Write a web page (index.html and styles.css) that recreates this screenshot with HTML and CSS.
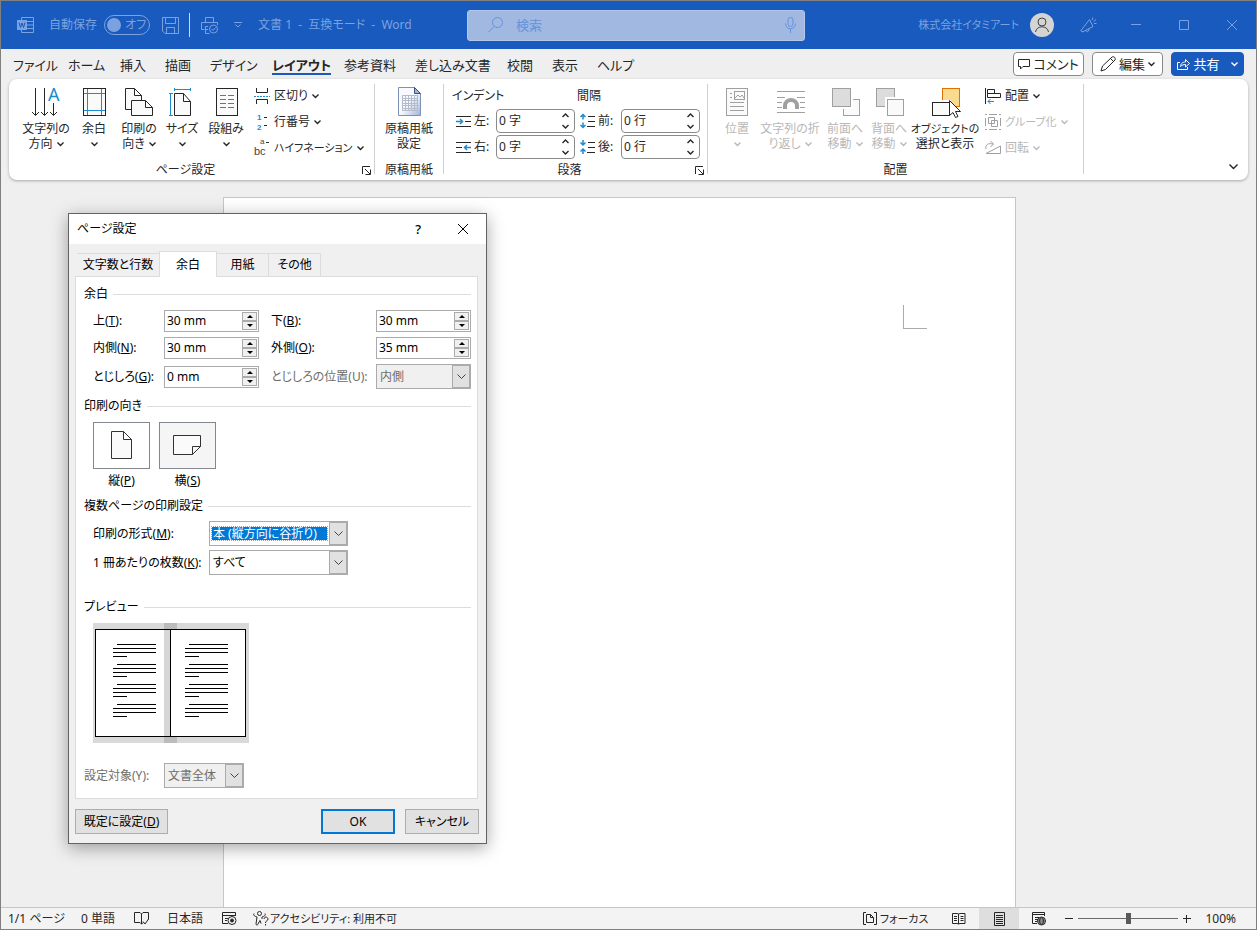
FILE: index.html
```html
<!DOCTYPE html>
<html lang="ja">
  <head>
    <meta charset="UTF-8">
    <title>文書 1 - 互換モード - Word</title>
    <link rel="stylesheet" href="styles.css">
  </head>
  <body>
    <header class="titlebar">
      <div class="title-left">
        <svg class="word-logo" width="17" height="16" viewBox="0 0 17 16"><path d="M4.500 4V.5h12v15h-12V12M10 4.500h6.500M10 8h6.500M10 11.500h6.500" /><rect class="solid" x="0" y="3" width="10" height="10" /><path class="cut" d="M2 5.500 3.500 10.500 5 6l1.500 4.500L8 5.500" /></svg>
        <label class="autosave" for="autosave">自動保存</label>
        <span class="switch"><input type="checkbox" id="autosave"><span>オフ</span></span>
        <button type="button" class="save" aria-label="保存"><svg width="17" height="17" viewBox="0 0 17 17"><path d="M.5.500h16v16H3L.5 14zM3.500.500v6h10v-6M4.500 16.500v-6h8v6" /></svg></button>
        <span class="title-divider"></span>
        <button type="button" class="print" aria-label="印刷"><svg width="18" height="17" viewBox="0 0 18 17"><path d="M4.500 5V.500h8V5M7 12.500H4.500M3.500 12.500H.500V5.500h16V8M4.500 12.500V9.500H7M4.500 12v4.500h4" /><circle cx="12.500" cy="12" r="4" /><path d="m10.500 12 1.500 1.500 2.500-3" /></svg></button>
        <button type="button" class="customize" aria-label="カスタマイズ"><svg width="8" height="6" viewBox="0 0 8 6"><path d="M0 .500h8M1.500 2.500 4 5l2.500-2.500" /></svg></button>
        <span>文書 1 &nbsp;- &nbsp;互換モード &nbsp;- &nbsp;Word</span>
      </div>
      <div class="search">
        <svg width="16" height="16" viewBox="0 0 16 16"><circle cx="9.500" cy="5.500" r="5" /><path d="M6 9.500.500 15" /></svg>
        <input type="text" placeholder="検索" aria-label="検索">
        <svg width="11" height="16" viewBox="0 0 11 16"><rect x="3" y=".5" width="5" height="9" rx="2.500" /><path d="M.500 6.500c0 7 10 7 10 0M5.500 12v4" /></svg>
      </div>
      <div class="title-right">
        <span class="compact">株式会社イタミアート</span>
        <svg class="avatar" width="24" height="24" viewBox="0 0 24 24"><circle class="face" cx="12" cy="12" r="12" /><circle cx="12" cy="9" r="4" /><path d="M5.500 19c1-7 12-7 13 0" /></svg>
        <button type="button" class="caption" aria-label="お知らせ"><svg width="17" height="16" viewBox="0 0 17 16"><path d="M1 13.500 9.500 2.500l3.500 7L2.500 15zM1 13.500 2.500 15M6 13c0 3 3.500 2 3-1.500M12 3l1-2.500M13.500 4.500l2.500-2M14 6.500h2.500" /></svg></button>
        <button type="button" class="caption" aria-label="最小化"><svg width="10" height="10" viewBox="0 0 10 10"><path d="M0 4.500h10" /></svg></button>
        <button type="button" class="caption" aria-label="最大化"><svg width="10" height="10" viewBox="0 0 10 10"><path d="M.5.500h9v9h-9z" /></svg></button>
        <button type="button" class="caption" aria-label="閉じる"><svg width="10" height="10" viewBox="0 0 10 10"><path d="m0 0 10 10M10 0 0 10" /></svg></button>
      </div>
    </header>

    <div class="tabbar">
      <nav class="tabs">
        <a href="#">ファイル</a>
        <a href="#">ホーム</a>
        <a href="#">挿入</a>
        <a href="#">描画</a>
        <a href="#">デザイン</a>
        <a href="#" class="active">レイアウト</a>
        <a href="#">参考資料</a>
        <a href="#">差し込み文書</a>
        <a href="#">校閲</a>
        <a href="#">表示</a>
        <a href="#">ヘルプ</a>
      </nav>
      <div class="tab-actions">
        <button type="button" class="pill"><svg width="12" height="11" viewBox="0 0 12 11"><path d="M.5.500h11v7H5L2.500 10V7.500h-2z" /></svg>コメント</button>
        <button type="button" class="pill"><svg width="16" height="16" viewBox="0 0 16 16"><path d="m1 15 1.500-5L12 1c2-1 4 1 3 3L5.500 13.500zM10.500 2.500l3 3" /></svg>編集<svg class="chev" width="7" height="4" viewBox="0 0 7 4"><path d="m.5.500 3 3 3-3" /></svg></button>
        <button type="button" class="pill primary"><svg width="13" height="12" viewBox="0 0 13 12"><path d="M3 4.500H.500v7h10V9M3.500 8.500C4 5 6 4 8.500 4V1.500l4 4-4 3.500V6.500C6.500 6.500 5 7 3.500 8.500z" /></svg>共有<svg class="chev far" width="7" height="4" viewBox="0 0 7 4"><path d="m.5.500 3 3 3-3" /></svg></button>
      </div>
    </div>

    <section class="ribbon">
      <div class="group group-page">
        <div class="group-body">
          <div class="big-buttons page-buttons">
            <button type="button" class="big">
              <svg width="36" height="32" viewBox="0 0 36 32"><path d="M7.500 2v27M4 26l3.500 3.500L11 26M16.500 2v27M13 26l3.500 3.500L20 26M25.500 17v12M22 26l3.500 3.500L29 26" /><text class="letter" x="20" y="15">A</text></svg>
              <span>文字列の</span>
              <span>方向<svg class="chev" width="7" height="4" viewBox="0 0 7 4"><path d="m.5.500 3 3 3-3" /></svg></span>
            </button>
            <button type="button" class="big">
              <svg width="36" height="32" viewBox="0 0 36 32"><rect class="paper" x="7.500" y="2.500" width="22" height="27" /><path class="blue" d="M11.500 3v26M25.500 3v26M8 7.500h21M8 24.500h21" /></svg>
              <span>余白</span>
              <span><svg class="chev" width="7" height="4" viewBox="0 0 7 4"><path d="m.5.500 3 3 3-3" /></svg></span>
            </button>
            <button type="button" class="big">
              <svg width="36" height="32" viewBox="0 0 36 32"><path class="paper" d="M10 23.500H4.500v-21h9l7 7V14M13.500 2.500v7h7" /><path class="paper" d="M10.500 14.500h14l7 7v8h-21zM24.500 14.500v7h7" /></svg>
              <span>印刷の</span>
              <span>向き<svg class="chev" width="7" height="4" viewBox="0 0 7 4"><path d="m.5.500 3 3 3-3" /></svg></span>
            </button>
            <button type="button" class="big">
              <svg width="36" height="32" viewBox="0 0 36 32"><path class="paper" d="M10.500 7.500h9l7 8v14h-16zM19.500 7.500v8h7" /><path class="blue" d="M6.500 7v23M5 7.500h4M5 29.500h4M10 3.500h17M10.500 2v3M26.500 2v3" /></svg>
              <span>サイズ</span>
              <span><svg class="chev" width="7" height="4" viewBox="0 0 7 4"><path d="m.5.500 3 3 3-3" /></svg></span>
            </button>
            <button type="button" class="big">
              <svg width="36" height="32" viewBox="0 0 36 32"><rect class="paper" x="8.500" y="2.500" width="21" height="27" /><path class="blue" d="M12 9.500h6M12 13.500h6M12 17.500h6M12 21.500h6M20 9.500h6M20 13.500h6M20 17.500h6M20 21.500h6" /></svg>
              <span>段組み</span>
              <span><svg class="chev" width="7" height="4" viewBox="0 0 7 4"><path d="m.5.500 3 3 3-3" /></svg></span>
            </button>
          </div>
          <div class="small-buttons">
            <button type="button" class="small"><svg width="16" height="16" viewBox="0 0 16 16"><path d="M2.500 0v4.500h11V0M2.500 16v-4.500h11V16" /><path class="blue" d="M0 8.500h16" stroke-dasharray="2 1" /></svg>区切り<svg class="chev" width="7" height="4" viewBox="0 0 7 4"><path d="m.5.500 3 3 3-3" /></svg></button>
            <button type="button" class="small"><svg width="16" height="16" viewBox="0 0 16 16"><text class="tiny" x="3" y="6">1</text><text class="tiny" x="3" y="16">2</text><path d="M10 3.500h3M10 11.500h3" /></svg>行番号<svg class="chev" width="7" height="4" viewBox="0 0 7 4"><path d="m.5.500 3 3 3-3" /></svg></button>
            <button type="button" class="small"><svg width="16" height="16" viewBox="0 0 16 16"><text class="syllable" x="0" y="15">bc</text><text class="syllable top" x="6" y="4">a</text><path d="M12 2.500h3" /></svg><span class="compact">ハイフネーション</span><svg class="chev" width="7" height="4" viewBox="0 0 7 4"><path d="m.5.500 3 3 3-3" /></svg></button>
          </div>
        </div>
        <div class="group-foot">
          <span>ページ設定</span>
          <button type="button" class="launcher" aria-label="ページ設定を開く"><svg width="9" height="9" viewBox="0 0 9 9"><path d="M.500 8V.500H8M3 3l5 5M8.500 3.500v5h-5" /></svg></button>
        </div>
      </div>
      <span class="divider"></span>

      <div class="group group-genko">
        <div class="group-body">
          <button type="button" class="big">
            <svg width="36" height="32" viewBox="0 0 36 32"><defs><linearGradient id="sheet" x1="0" y1="0" x2="1" y2="1"><stop offset="0.500" stop-color="#f8faff" /><stop offset="1" stop-color="#9db4dc" /></linearGradient></defs><path class="genko" d="M7.500 1.500h16l6 6v22h-22z" /><path class="genko-fold" d="M23.500 1.500v6h6z" /><path class="genko-lines" d="M11 9.500h15M11 12.500h15M11 14.500h15M11 17.500h15M11 19.500h15M11 22.500h15M11 24.500h15M11.500 9v16M14.500 9v16M17.500 9v16M20.500 9v16M23.500 9v16M26.500 9v16" /></svg>
            <span>原稿用紙</span>
            <span>設定</span>
          </button>
        </div>
        <div class="group-foot"><span>原稿用紙</span></div>
      </div>
      <span class="divider"></span>

      <div class="group group-paragraph">
        <div class="group-body">
          <div class="headings"><span>インデント</span><span>間隔</span></div>
          <div class="measures">
            <label for="indent-left"><svg width="16" height="16" viewBox="0 0 16 16"><path d="M0 3.500h15M9 8.500h6M0 13.500h15" /><path class="arrow" d="M0 8.500h7M4 6l2.500 2.500L4 11" /></svg>左:</label>
            <div class="spin"><input type="text" id="indent-left" value="0 字"><svg class="chev" width="7" height="16" viewBox="0 0 7 16"><path d="m.500 4 3-3 3 3M.500 12l3 3 3-3" /></svg></div>
            <label for="space-before"><svg width="16" height="16" viewBox="0 0 16 16"><path d="M8 3.500h7M8 8.500h7M7 13.500h8" /><path class="arrow" d="M3 1.500v5M.500 4 3 1.500 5.500 4M3 9.500v5M.500 12 3 14.500 5.500 12" /></svg>前:</label>
            <div class="spin"><input type="text" id="space-before" value="0 行"><svg class="chev" width="7" height="16" viewBox="0 0 7 16"><path d="m.500 4 3-3 3 3M.500 12l3 3 3-3" /></svg></div>
            <label for="indent-right"><svg width="16" height="16" viewBox="0 0 16 16"><path d="M0 3.500h15M0 8.500h6M0 13.500h15" /><path class="arrow" d="M8 8.500h7M11 6 8.500 8.500 11 11" /></svg>右:</label>
            <div class="spin"><input type="text" id="indent-right" value="0 字"><svg class="chev" width="7" height="16" viewBox="0 0 7 16"><path d="m.500 4 3-3 3 3M.500 12l3 3 3-3" /></svg></div>
            <label for="space-after"><svg width="16" height="16" viewBox="0 0 16 16"><path d="M8 3.500h7M8 8.500h7M7 13.500h8" /><path class="arrow" d="M3 1v5M.500 3.500 3 6l2.500-2.500M3 10v5M.500 12.500 3 10l2.500 2.500" /></svg>後:</label>
            <div class="spin"><input type="text" id="space-after" value="0 行"><svg class="chev" width="7" height="16" viewBox="0 0 7 16"><path d="m.500 4 3-3 3 3M.500 12l3 3 3-3" /></svg></div>
          </div>
        </div>
        <div class="group-foot">
          <span>段落</span>
          <button type="button" class="launcher" aria-label="段落を開く"><svg width="9" height="9" viewBox="0 0 9 9"><path d="M.500 8V.500H8M3 3l5 5M8.500 3.500v5h-5" /></svg></button>
        </div>
      </div>
      <span class="divider"></span>

      <div class="group group-arrange">
        <div class="group-body">
          <div class="big-buttons arrange-buttons">
            <button type="button" class="big" disabled>
              <svg width="36" height="32" viewBox="0 0 36 32"><rect class="paper" x="7.500" y="2.500" width="21" height="27" /><rect x="15.500" y="5.500" width="10" height="8" /><path d="m16 12 3-3 2 2 2-2 2 3M11 7.500h2M11 11.500h2M11 16.500h14M11 20.500h14M11 24.500h14" /></svg>
              <span>位置</span>
              <span><svg class="chev" width="7" height="4" viewBox="0 0 7 4"><path d="m.5.500 3 3 3-3" /></svg></span>
            </button>
            <button type="button" class="big" disabled>
              <svg width="36" height="32" viewBox="0 0 36 32"><path d="M5 5.500h28M5 11.500h8M25 11.500h8M5 16.500h5M28 16.500h5M5 21.500h5M28 21.500h5M5 26.500h28" /><path class="arch" d="M13 23v-3c0-8 12-8 12 0v3" /></svg>
              <span>文字列の折</span>
              <span>り返し<svg class="chev" width="7" height="4" viewBox="0 0 7 4"><path d="m.5.500 3 3 3-3" /></svg></span>
            </button>
            <button type="button" class="big" disabled>
              <svg width="36" height="32" viewBox="0 0 36 32"><rect class="paper" x="16.500" y="13.500" width="16" height="16" /><rect class="halo" x="5.500" y="2.500" width="20" height="20" /><rect class="shade" x="5.500" y="2.500" width="18" height="18" /></svg>
              <span>前面へ</span>
              <span>移動<svg class="chev" width="7" height="4" viewBox="0 0 7 4"><path d="m.5.500 3 3 3-3" /></svg></span>
            </button>
            <button type="button" class="big" disabled>
              <svg width="36" height="32" viewBox="0 0 36 32"><rect class="shade" x="5.500" y="2.500" width="18" height="18" /><rect class="halo" x="14.500" y="11.500" width="18" height="18" /><rect class="paper" x="16.500" y="13.500" width="16" height="16" /></svg>
              <span>背面へ</span>
              <span>移動<svg class="chev" width="7" height="4" viewBox="0 0 7 4"><path d="m.5.500 3 3 3-3" /></svg></span>
            </button>
            <button type="button" class="big">
              <svg width="36" height="32" viewBox="0 0 36 32"><rect class="orange" x="15.500" y="2.500" width="17" height="18" /><rect class="halo" x="5.500" y="14.500" width="18" height="15" /><rect class="paper" x="5.500" y="16.500" width="17" height="13" /><path class="cursor" d="M22.500 14.500v15l3.500-3 2.500 5 2.500-1-2.500-5h5z" /></svg>
              <span class="compact">オブジェクトの</span>
              <span>選択と表示</span>
            </button>
          </div>
          <div class="small-buttons">
            <button type="button" class="small"><svg width="16" height="16" viewBox="0 0 16 16"><path d="M.500 0v16M2.500 1.500h7v4h-7zM2.500 5.500h13v4h-13z" /><path class="blue" d="M3 13.500h6M5.500 11 3 13.500 5.500 16" /></svg>配置<svg class="chev" width="7" height="4" viewBox="0 0 7 4"><path d="m.5.500 3 3 3-3" /></svg></button>
            <button type="button" class="small" disabled><svg width="16" height="16" viewBox="0 0 16 16"><path d="M0 .500h2M14 .500h2M0 15.500h2M14 15.500h2M4 .500h8M4 15.500h8M.500 4v8M15.500 4v8M3.500 3.500h6v6h-6zM6.500 6.500h6v6h-6z" /></svg><span class="compact">グループ化</span><svg class="chev" width="7" height="4" viewBox="0 0 7 4"><path d="m.5.500 3 3 3-3" /></svg></button>
            <button type="button" class="small" disabled><svg width="16" height="16" viewBox="0 0 16 16"><path d="M1 13.500h14.500V6zM1 9c-1-5 3-6 7-5M5.500 1 8.500 4 5.500 7" /></svg>回転<svg class="chev" width="7" height="4" viewBox="0 0 7 4"><path d="m.5.500 3 3 3-3" /></svg></button>
          </div>
        </div>
        <div class="group-foot"><span>配置</span></div>
      </div>
      <span class="divider"></span>
      <button type="button" class="collapse" aria-label="リボンの表示オプション"><svg class="chev" width="9" height="6" viewBox="0 0 9 6"><path d="m.500.500 4 4 4-4" /></svg></button>
    </section>

    <main class="workspace">
      <div class="page"><span class="crop-mark"></span></div>
    </main>

    <footer class="statusbar">
      <span class="status-page">1/1 ページ</span>
      <span class="status-words">0 単語</span>
      <svg class="status-proof" width="15" height="13" viewBox="0 0 15 13"><path d="M7.500 2v10L6 10.500H.500v-10H6L7.500 2 9 .500h5.500v7M7.500 12l2-1.500M9 9.500l2 2.500 3.500-5" /></svg>
      <span class="status-lang">日本語</span>
      <svg class="status-macro" width="15" height="13" viewBox="0 0 15 13"><path d="M6 11.500H.500V.500h13V4M1 3.500h13M3 6.500h3M3 8.500h2" /><circle cx="10" cy="8.500" r="4" /><circle class="dot" cx="10" cy="8.500" r="1.500" /></svg>
      <span class="status-access"><svg width="16" height="15" viewBox="0 0 16 15"><circle cx="6.500" cy="2.500" r="2" /><path d="M1 2.500c-1 2 .500 2.500 3 3.500L3 13c.500 2 2 1 2.500-1L7 9.500l1 3M12 2.500c1 2-.500 2.500-3 3.500v2M11 8c.500-3 4-2 4 0s-2.500 1.500-2.500 4M12.500 13v1.500" /></svg><span class="compact">アクセシビリティ: 利用不可</span></span>
      <span class="status-focus"><svg width="14" height="13" viewBox="0 0 14 13"><path d="M3 .500H.500v12H3M11 .500h2.500v12H11M3.500 2.500h4l3 3v5h-7zM7.500 2.500v3h3" /></svg><span class="compact">フォーカス</span></span>
      <div class="views">
        <button type="button" aria-label="閲覧モード"><svg width="14" height="13" viewBox="0 0 14 13"><path d="M6.500 2v10L5 11.500H.500v-10H5L6.500 2 8 1.500h5v10H8L6.500 12M2 4.500h3M2 6.500h3M2 8.500h3M8.500 4.500h3M8.500 6.500h3M8.500 8.500h3" /></svg></button>
        <button type="button" class="current" aria-label="印刷レイアウト"><svg width="11" height="14" viewBox="0 0 11 14"><path d="M.500.500h10v13H.500zM2 3.500h7M2 5.500h7M2 7.500h7M2 9.500h7M2 11.500h7" /></svg></button>
        <button type="button" aria-label="Web レイアウト"><svg width="15" height="14" viewBox="0 0 15 14"><path d="M5 11.500H.500V.500h12V4M1 2.500h11M3 5.500h4M3 7.500h3M3 9.500h2" /><circle cx="9.500" cy="9" r="4" /><path d="M5.500 9h8M9.500 5c-2.500 2-2.500 6 0 8 2.500-2 2.500-6 0-8M6.500 7h6M6.500 11h6" /></svg></button>
      </div>
      <div class="zoom">
        <button type="button" aria-label="縮小"><svg width="8" height="8" viewBox="0 0 8 8"><path d="M0 3.500h8" /></svg></button>
        <input type="range" min="0" max="100" value="50" aria-label="ズーム">
        <button type="button" aria-label="拡大"><svg width="8" height="8" viewBox="0 0 8 8"><path d="M0 3.500h8M3.500 0v8" /></svg></button>
        <span>100%</span>
      </div>
    </footer>

    <div class="dialog" role="dialog" aria-labelledby="dialog-title">
      <div class="dialog-head">
        <span id="dialog-title">ページ設定</span>
        <button type="button" class="help">?</button>
        <button type="button" aria-label="閉じる"><svg width="10" height="10" viewBox="0 0 10 10"><path d="m0 0 10 10M10 0 0 10" /></svg></button>
      </div>
      <form class="dialog-body">
        <div class="dialog-tabs">
          <button type="button">文字数と行数</button>
          <button type="button" class="active">余白</button>
          <button type="button">用紙</button>
          <button type="button">その他</button>
        </div>
        <div class="panel">
          <h2>余白</h2>
          <div class="margins">
            <label for="top">上(<u>T</u>):</label>
            <div class="stepper"><input type="text" id="top" value="30 mm"><span class="steps"><i class="up"></i><i class="down"></i></span></div>
            <label class="second" for="bottom">下(<u>B</u>):</label>
            <div class="stepper"><input type="text" id="bottom" value="30 mm"><span class="steps"><i class="up"></i><i class="down"></i></span></div>
            <label for="inside">内側(<u>N</u>):</label>
            <div class="stepper"><input type="text" id="inside" value="30 mm"><span class="steps"><i class="up"></i><i class="down"></i></span></div>
            <label class="second" for="outside">外側(<u>O</u>):</label>
            <div class="stepper"><input type="text" id="outside" value="35 mm"><span class="steps"><i class="up"></i><i class="down"></i></span></div>
            <label for="gutter">とじしろ(<u>G</u>):</label>
            <div class="stepper"><input type="text" id="gutter" value="0 mm"><span class="steps"><i class="up"></i><i class="down"></i></span></div>
            <label class="second muted" for="gutter-pos">とじしろの位置(U):</label>
            <div class="combo off"><select id="gutter-pos" disabled><option>内側</option></select><span><svg width="9" height="5" viewBox="0 0 9 5"><path d="m.500.500 4 4 4-4" /></svg></span></div>
          </div>

          <h2>印刷の向き</h2>
          <div class="orientation">
            <button type="button">
              <span class="tile"><svg width="29" height="29" viewBox="0 0 29 29"><path d="M4.500.500h12l8 8v19h-20zM16.500.500v8h8" /></svg></span>
              <span>縦(<u>P</u>)</span>
            </button>
            <button type="button">
              <span class="tile pressed"><svg width="29" height="29" viewBox="0 0 29 29"><path d="M.500 4.500h27v11l-8 8H.500zM27.500 15.500h-8v8" /></svg></span>
              <span>横(<u>S</u>)</span>
            </button>
          </div>

          <h2>複数ページの印刷設定</h2>
          <div class="multi">
            <label for="pages">印刷の形式(<u>M</u>):</label>
            <div class="combo focused"><select id="pages"><option>本 (縦方向に谷折り)</option></select><span><svg width="9" height="5" viewBox="0 0 9 5"><path d="m.500.500 4 4 4-4" /></svg></span></div>
            <label for="sheets">1 冊あたりの枚数(<u>K</u>):</label>
            <div class="combo"><select id="sheets"><option>すべて</option></select><span><svg width="9" height="5" viewBox="0 0 9 5"><path d="m.500.500 4 4 4-4" /></svg></span></div>
          </div>

          <h2>プレビュー</h2>
          <svg class="preview" width="156" height="120" viewBox="0 0 156 120">
            <defs>
              <g id="para"><path d="M4 .500h39M0 4.500h43M0 8.500h43M0 12.500h14" /></g>
              <g id="column"><use href="#para" /><use href="#para" y="20" /><use href="#para" y="40" /><use href="#para" y="60" /></g>
            </defs>
            <rect fill="#d9d9d9" stroke="none" width="156" height="120" />
            <rect fill="#bcbcbc" stroke="none" x="71" width="13" height="120" />
            <rect fill="#fff" stroke="#000" x="2.500" y="6.500" width="150" height="107" />
            <rect fill="#d6d6d6" stroke="none" x="71" y="7" width="6" height="106" />
            <path stroke="#000" d="M77.500 6v108" />
            <use href="#column" x="20" y="21" stroke="#000" />
            <use href="#column" x="92" y="21" stroke="#000" />
          </svg>

          <div class="apply">
            <label class="muted" for="apply-to">設定対象(Y):</label>
            <div class="combo off"><select id="apply-to" disabled><option>文書全体</option></select><span><svg width="9" height="5" viewBox="0 0 9 5"><path d="m.500.500 4 4 4-4" /></svg></span></div>
          </div>
        </div>
        <div class="dialog-foot">
          <button type="button" class="set-default">既定に設定(<u>D</u>)</button>
          <button type="button" class="ok">OK</button>
          <button type="button">キャンセル</button>
        </div>
      </form>
    </div>
  </body>
</html>
```

FILE: styles.css
```css
* {
  box-sizing: border-box;
}
body {
  margin: 0;
  height: 100vh;
  display: flex;
  flex-direction: column;
  border: 1px solid #808080;
  background: #efefef;
  color: #262626;
  font-family: "Noto Sans", "Noto Sans CJK JP", sans-serif;
  font-feature-settings: "palt";
  font-size: 12px;
  line-height: 16px;
  overflow: hidden;
  white-space: nowrap;
}
button,
input,
select {
  font: inherit;
  font-feature-settings: inherit;
  color: inherit;
  border: 0;
  padding: 0;
  background: none;
}
svg {
  display: block;
  flex: none;
  fill: none;
  stroke: currentColor;
  overflow: visible;
}
svg text {
  stroke: none;
  fill: #1e8bcd;
}
.chev {
  stroke-width: 1.4;
}
/* long katakana labels */
.compact {
  font-size: 11px;
}

/* title bar */
.titlebar {
  display: flex;
  align-items: center;
  flex: none;
  height: 48px;
  background: #185abd;
  color: #7ba2e0;
}
.title-left {
  display: flex;
  align-items: center;
  width: 466px;
  padding-left: 16px;
}
.word-logo .solid {
  fill: #7ba2e0;
  stroke: none;
}
.word-logo .cut {
  stroke: #185abd;
}
.autosave {
  margin: 0 7px 0 15px;
}
.switch {
  display: flex;
  align-items: center;
  width: 46px;
  height: 20px;
  border: 1px solid #7ba2e0;
  border-radius: 10px;
  padding: 0 5px 0 2px;
}
.switch input {
  appearance: none;
  flex: none;
  width: 14px;
  height: 14px;
  margin: 0 4px 0 0;
  border-radius: 50%;
  background: #7ba2e0;
}
.save {
  margin: 0 10px 0 12px;
}
.title-divider {
  width: 1px;
  height: 24px;
  background: #cddcf3;
}
.print {
  margin: 0 15px 0 11px;
}
.customize {
  margin-right: 16px;
}
.search {
  display: flex;
  align-items: center;
  width: 338px;
  height: 31px;
  padding: 0 8px 0 20px;
  border: 1px solid #b3c8ec;
  border-radius: 3px;
  background: #a1b8e1;
  color: #6592dc;
}
.search input {
  flex: 1;
  min-width: 0;
  margin-left: 12px;
  font-size: 13px;
}
.search input::placeholder {
  color: #6592dc;
}
.title-right {
  display: flex;
  flex: 1;
  align-items: center;
  justify-content: flex-end;
}
.avatar {
  margin: 0 10px 0 11px;
  color: #444;
}
.avatar .face {
  fill: #d4d4d4;
  stroke: none;
}
.caption {
  display: flex;
  align-items: center;
  justify-content: center;
  width: 48px;
  height: 48px;
}

/* ribbon tabs */
.tabbar {
  display: flex;
  flex: none;
  justify-content: space-between;
  height: 30px;
  padding: 3px 12px 0;
  font-size: 13px;
}
.tabs {
  display: grid;
  grid-template-columns: 55px 52px 45px 45px 62px 72px 71px 92px 45px 45px 45px;
  align-items: start;
}
.tabs a {
  justify-self: start;
  padding-top: 5px;
  color: inherit;
  text-decoration: none;
}
.tabs .active {
  font-weight: bold;
  border-bottom: 2px solid #185abd;
}
.tab-actions {
  display: flex;
  gap: 8px;
}
.pill {
  display: flex;
  align-items: center;
  justify-content: center;
  gap: 3px;
  width: 71px;
  height: 24px;
  border: 1px solid #8a8a8a;
  border-radius: 4px;
  background: #fff;
}
.pill.primary {
  width: 73px;
  border-color: #185abd;
  background: #185abd;
  color: #fff;
}
.pill .far {
  margin-left: 8px;
}

/* ribbon */
.ribbon {
  display: flex;
  flex: none;
  height: 101px;
  margin: 0 8px;
  border-radius: 8px;
  background: #fff;
  box-shadow: 0 1px 3px rgba(0, 0, 0, 0.3);
}
.divider {
  flex: none;
  width: 1px;
  height: 90px;
  margin-top: 5px;
  background: #d0d0d0;
}
.group {
  padding-top: 3px;
}
.group-page {
  width: 365px;
}
.group-genko {
  width: 68px;
}
.group-paragraph {
  width: 263px;
}
.group-arrange {
  width: 375px;
}
.group-body {
  display: flex;
  height: 78px;
}
.group-page .group-body {
  gap: 5px;
  padding-left: 12px;
}
.group-genko .group-body {
  justify-content: center;
}
.group-paragraph .group-body {
  display: block;
}
.group-arrange .group-body {
  gap: 7px;
  padding-left: 10px;
}
.group-foot {
  display: flex;
  align-items: center;
  height: 20px;
}
.group-foot span {
  flex: 1;
  text-align: center;
}
.launcher {
  margin-right: 3px;
}
.big-buttons {
  display: grid;
}
.page-buttons {
  grid-template-columns: 50px 46px 44px 42px 46px;
}
.arrange-buttons {
  grid-template-columns: 38px 68px 42px 46px 66px;
}
.big {
  display: flex;
  flex-direction: column;
  align-items: center;
  padding-top: 4px;
  line-height: 15px;
}
.big > svg {
  margin-bottom: 3px;
}
.big span {
  display: flex;
  align-items: center;
  gap: 4px;
  height: 15px;
}
button:disabled {
  color: #b8b8b8;
}
.big:disabled > svg,
.small:disabled > svg:first-child {
  color: #a0a0a0;
}
.small {
  display: flex;
  align-items: center;
  gap: 4px;
  height: 26px;
  padding-top: 2px;
}
.blue,
.arrow {
  stroke: #1e8bcd;
}
.arrow {
  stroke-width: 1.5;
}
.paper {
  fill: #fafafa;
}
.shade {
  fill: #dcdcdc;
}
.halo {
  fill: #fff;
  stroke: #fff;
}
.orange {
  fill: #f8db8f;
  stroke: #e07000;
}
.cursor {
  fill: #fff;
}
.arch {
  stroke-width: 4;
}
.letter {
  font-size: 18px;
}
svg .tiny,
svg .syllable {
  font-family: "Liberation Sans", sans-serif;
  font-size: 8px;
}
svg .tiny {
  font-weight: bold;
}
svg .syllable {
  font-size: 11px;
  fill: #444;
}
svg .top {
  font-size: 8px;
}
.genko {
  fill: url(#sheet);
  stroke: #7f92b5;
}
.genko-fold {
  fill: #9db4dc;
  stroke: #33507f;
}
.genko-lines {
  stroke: #b4bccb;
}
.headings {
  display: grid;
  grid-template-columns: 125px auto;
  padding: 1px 0 0 8px;
  line-height: 25px;
}
.measures {
  display: grid;
  grid-template-columns: 40px 79px 46px 79px;
  grid-auto-rows: 26px;
  align-items: center;
  padding-left: 12px;
}
.measures label {
  display: flex;
  align-items: center;
  gap: 2px;
}
.measures label:nth-of-type(even) {
  padding-left: 5px;
}
.spin {
  display: flex;
  align-items: center;
  height: 24px;
  padding: 0 5px 0 2px;
  border: 1px solid #8a8a8a;
  border-radius: 4px;
}
.spin input {
  flex: 1;
  min-width: 0;
}
.collapse {
  align-self: flex-end;
  margin: 0 10px 10px auto;
}

/* document area */
.workspace {
  display: flex;
  flex: 1;
  justify-content: center;
  padding: 17px 18px 0 0;
  min-height: 0;
}
.page {
  width: 793px;
  border: 1px solid #c6c6c6;
  border-bottom: 0;
  background: #fff;
}
.crop-mark {
  display: block;
  width: 24px;
  height: 24px;
  margin: 107px 88px 0 auto;
  border: solid #ababab;
  border-width: 0 0 1px 1px;
}

/* status bar */
.statusbar {
  display: flex;
  align-items: center;
  flex: none;
  height: 22px;
  padding: 0 20px 0 7px;
  border-top: 1px solid #c6c6c6;
  background: #f3f3f3;
}
.status-page {
  width: 73px;
}
.status-words {
  width: 53px;
}
.status-proof {
  margin-right: 18px;
}
.status-lang {
  width: 55px;
}
.status-macro {
  margin-right: 16px;
}
.status-macro .dot {
  fill: currentColor;
}
.status-access {
  display: flex;
  align-items: center;
  gap: 1px;
}
.status-focus {
  display: flex;
  align-items: center;
  gap: 3px;
  margin-left: auto;
}
.views {
  display: flex;
  margin: 0 6px 0 11px;
}
.views button {
  display: flex;
  align-items: center;
  justify-content: center;
  width: 40px;
  height: 21px;
}
.views .current {
  background: #dedede;
}
.zoom {
  display: flex;
  align-items: center;
  gap: 5px;
}
.zoom input {
  appearance: none;
  width: 100px;
  height: 12px;
  margin: 0;
  background: linear-gradient(#6a6a6a, #6a6a6a) center / 100% 1px no-repeat;
}
.zoom input::-webkit-slider-thumb {
  appearance: none;
  width: 5px;
  height: 11px;
  background: #5a5a5a;
}
.zoom span {
  margin-left: 9px;
}

/* page setup dialog */
.dialog {
  position: absolute;
  top: 213px;
  left: 68px;
  width: 419px;
  border: 1px solid #636363;
  background: #f0f0f0;
  color: #000;
  box-shadow: 0 4px 16px rgba(0, 0, 0, 0.35);
}
.dialog-head {
  display: flex;
  align-items: center;
  height: 30px;
  padding: 0 18px 0 8px;
  background: #fff;
}
.dialog-head .help {
  margin: 0 37px 0 auto;
  font-size: 13px;
  font-weight: 500;
}
.dialog-body {
  padding: 7px 7px 9px 6px;
}
.dialog-tabs {
  display: flex;
  align-items: flex-end;
  height: 25px;
  padding-left: 2px;
}
.dialog-tabs button {
  height: 23px;
  width: 52px;
  border: 1px solid #dcdcdc;
  border-width: 1px 1px 0 0;
}
.dialog-tabs button:first-child {
  width: 82px;
  border-right: 0;
}
.dialog-tabs .active {
  width: 58px;
  height: 26px;
  margin-bottom: -1px;
  border-left-width: 1px;
  background: #fff;
}
.panel {
  width: 403px;
  padding: 9px 6px 10px 8px;
  border: 1px solid #dcdcdc;
  background: #fff;
}
.panel h2 {
  display: flex;
  align-items: center;
  gap: 5px;
  margin: 0;
  font-size: 12px;
  font-weight: normal;
}
.panel h2::after {
  content: "";
  flex: 1;
  height: 1px;
  background: #dcdcdc;
}
.muted {
  color: #6d6d6d;
}
.margins {
  display: grid;
  grid-template-columns: 71px 95px 117px 95px;
  row-gap: 5px;
  align-items: center;
  margin: 8px 0 9px;
  padding-left: 9px;
}
.margins .second {
  padding-left: 12px;
}
.stepper {
  display: flex;
  height: 22px;
  padding: 1px 1px 1px 2px;
  border: 1px solid #ababab;
}
.stepper input {
  flex: 1;
  min-width: 0;
}
.steps {
  display: flex;
  flex-direction: column;
  width: 15px;
}
.steps i {
  display: flex;
  flex: 1;
  align-items: center;
  justify-content: center;
  border: 1px solid #ababab;
  background: #f0f0f0;
}
.steps i::before {
  content: "";
  border: 3px solid transparent;
}
.steps .up::before {
  border-top-width: 0;
  border-bottom-color: #000;
}
.steps .down::before {
  border-bottom-width: 0;
  border-top-color: #000;
}
.combo {
  display: flex;
  height: 25px;
  border: 1px solid #ababab;
  background: #fff;
}
.combo select {
  appearance: none;
  flex: 1;
  min-width: 0;
  padding-left: 3px;
  opacity: 1;
}
.combo span {
  display: flex;
  align-items: center;
  justify-content: center;
  width: 18px;
  border: 1px solid #ababab;
  background: #e1e1e1;
  color: #444;
  pointer-events: none;
}
.combo.off {
  background: #f0f0f0;
  color: #6d6d6d;
}
.combo.focused select {
  margin: 4px 1px;
  padding-left: 1px;
  border: 1px dotted #ff8728;
  background: #0078d7 padding-box;
  color: #fff;
  line-height: 13px;
}
.orientation {
  display: flex;
  gap: 9px;
  margin: 8px 0 9px;
  padding-left: 9px;
}
.orientation button {
  width: 57px;
}
.orientation span {
  display: block;
}
.orientation .tile {
  display: flex;
  align-items: center;
  justify-content: center;
  height: 47px;
  margin-bottom: 4px;
  border: 1px solid #83878f;
}
.orientation .pressed {
  background: #f5f5f5;
}
.orientation path {
  fill: #fafafa;
  stroke: #333;
}
.multi {
  display: grid;
  grid-template-columns: 116px 139px;
  row-gap: 4px;
  align-items: center;
  margin: 7px 0 24px;
  padding-left: 9px;
}
.preview {
  margin: 8px 0 20px 9px;
}
.apply {
  display: grid;
  grid-template-columns: 80px 80px;
  align-items: center;
}
.dialog-foot {
  display: flex;
  gap: 10px;
  margin-top: 10px;
}
.dialog-foot button {
  width: 74px;
  height: 25px;
  border: 1px solid #adadad;
  background: #e1e1e1;
}
.dialog-foot .set-default {
  width: 93px;
  margin-right: auto;
}
.dialog-foot .ok {
  border: 2px solid #0078d7;
}
```
